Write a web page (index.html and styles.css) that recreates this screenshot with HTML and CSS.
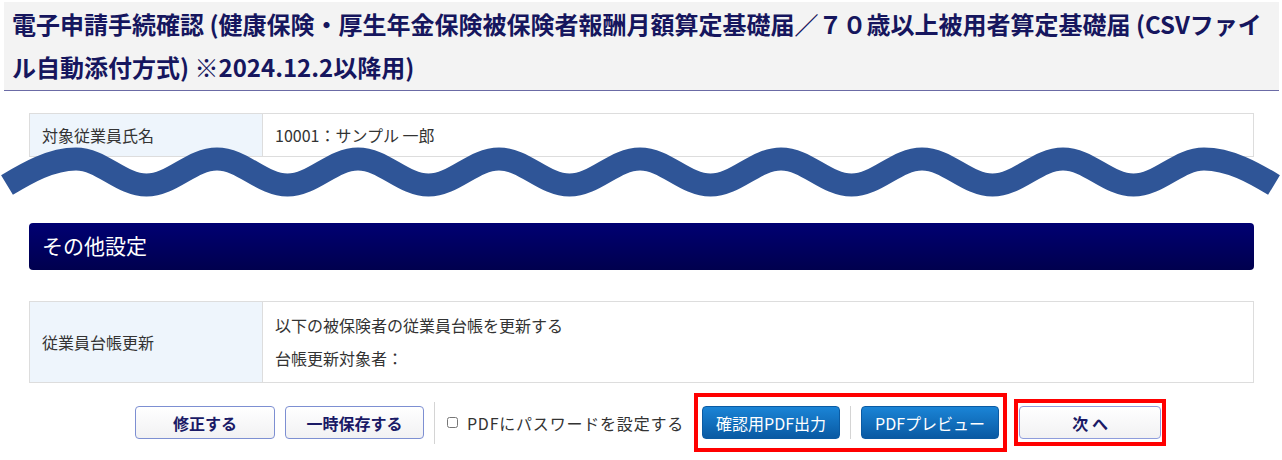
FILE: index.html
```html
<!DOCTYPE html>
<html lang="ja">
<head>
    <meta charset="UTF-8">
    <meta name="viewport" content="width=device-width, initial-scale=1.0">
    <title>電子申請手続確認</title>
    <link rel="stylesheet" href="styles.css">
</head>
<body>
    <div class="page-title">
        <h1>電子申請手続確認 (健康保険・厚生年金保険被保険者報酬月額算定基礎届／７０歳以上被用者算定基礎届 (CSVファイル自動添付方式) ※2024.12.2以降用)</h1>
    </div>

    <div class="content">
        <table class="info-table">
            <tr>
                <th>対象従業員氏名</th>
                <td>10001：サンプル 一郎</td>
            </tr>
        </table>

        <div class="section-bar">その他設定</div>

        <table class="info-table info-tall">
            <tr>
                <th>従業員台帳更新</th>
                <td>
                    <p>以下の被保険者の従業員台帳を更新する</p>
                    <p>台帳更新対象者：</p>
                </td>
            </tr>
        </table>

        <div class="actions">
            <button class="btn">修正する</button>
            <button class="btn btn-save">一時保存する</button>
            <span class="divider"></span>
            <label class="pw-check"><input type="checkbox"> <span>PDFにパスワードを設定する</span></label>
            <div class="mark mark-pdf">
                <button class="btn btn-blue">確認用PDF出力</button>
                <span class="divider divider-small"></span>
                <button class="btn btn-blue">PDFプレビュー</button>
            </div>
            <div class="mark mark-next">
                <button class="btn btn-next">次 へ</button>
            </div>
        </div>
    </div>

    <!-- 省略を示す波線 -->
    <svg class="wave" width="1282" height="80" viewBox="0 130 1282 80">
        <path d="M 7 185 C 27 173 51 159 76 159 c 25.7 0 44.8 26 70.5 26 s 44.8 -26 70.5 -26 s 44.8 26 70.5 26 s 44.8 -26 70.5 -26 s 44.8 26 70.5 26 s 44.8 -26 70.5 -26 s 44.8 26 70.5 26 s 44.8 -26 70.5 -26 s 44.8 26 70.5 26 s 44.8 -26 70.5 -26 s 44.8 26 70.5 26 s 44.8 -26 70.5 -26 s 44.8 26 70.5 26 s 44.8 -26 70.5 -26 s 44.8 26 70.5 26 s 44.8 -26 70.5 -26 s 50 14 70 26" fill="none" stroke="#2f5597" stroke-width="23"/>
    </svg>
</body>
</html>
```

FILE: styles.css
```css
body {
    margin: 0;
    font-family: "Noto Sans CJK JP", "Noto Sans", sans-serif;
    color: #333;
    background: #fff;
    position: relative;
}
.page-title {
    margin: 2px 3px 0 4px;
    padding: 0 8px 2px 8px;
    background-color: #f3f3f3;
    border-bottom: 1px solid #6b6ba6;
}
.page-title h1 {
    margin: 0;
    font-size: 24px;
    line-height: 43px;
    font-weight: bold;
    color: #16165e;
}
.content {
    padding: 0 28px 0 29px;
}
.info-table {
    width: 100%;
    border-collapse: collapse;
    margin-top: 22px;
    font-size: 16px;
}
.info-table th,
.info-table td {
    border: 1px solid #ddd;
    text-align: left;
    font-weight: normal;
    padding: 0 12px;
    height: 42px;
}
.info-table th {
    width: 208px;
    background-color: #eef5fc;
    color: #333;
}
.info-tall {
    margin-top: 31px;
}
.info-tall th,
.info-tall td {
    height: 80px;
}
.info-tall p {
    margin: 0;
    line-height: 33px;
}
.section-bar {
    margin-top: 66px;
    height: 47px;
    line-height: 45px;
    padding-left: 13px;
    border-radius: 4px;
    background: linear-gradient(#000072, #00004e);
    color: #fff;
    font-size: 21px;
}
.actions {
    display: flex;
    align-items: center;
    justify-content: center;
    padding-left: 18px;
    margin-top: 10px;
    gap: 10px;
}
.btn {
    font-family: inherit;
    font-size: 16px;
    height: 33px;
    width: 140px;
    border-radius: 4px;
    cursor: pointer;
    border: 1px solid #7d8fd2;
    background: linear-gradient(#ffffff, #f1f1f3);
    color: #1a1a66;
    font-weight: bold;
    padding: 0;
}
.btn-save {
    width: 139px;
}
.btn-blue {
    width: 138px;
    border: 1px solid #0b5ba3;
    background: linear-gradient(#1a84d6, #0a5aa3);
    color: #fff;
    font-weight: normal;
}
.btn-next {
    width: 142px;
    border-color: #8e9cdc;
}
.divider {
    width: 1px;
    height: 42px;
    background-color: #d4d4d4;
}
.divider-small {
    height: 33px;
}
.pw-check {
    display: flex;
    align-items: center;
    gap: 9px;
    font-size: 16px;
    color: #333;
    margin-left: 2px;
}
.pw-check span {
    letter-spacing: 0.8px;
}
.pw-check input {
    margin: 0;
    width: 11px;
    height: 11px;
}
.mark {
    display: flex;
    align-items: center;
    border: 4px solid #ff0000;
}
.mark-pdf {
    gap: 10px;
    padding: 9px 4px;
}
.mark-next {
    padding: 3px 1px;
    margin-left: -3px;
}
.wave {
    position: absolute;
    left: 0;
    top: 130px;
}
```
